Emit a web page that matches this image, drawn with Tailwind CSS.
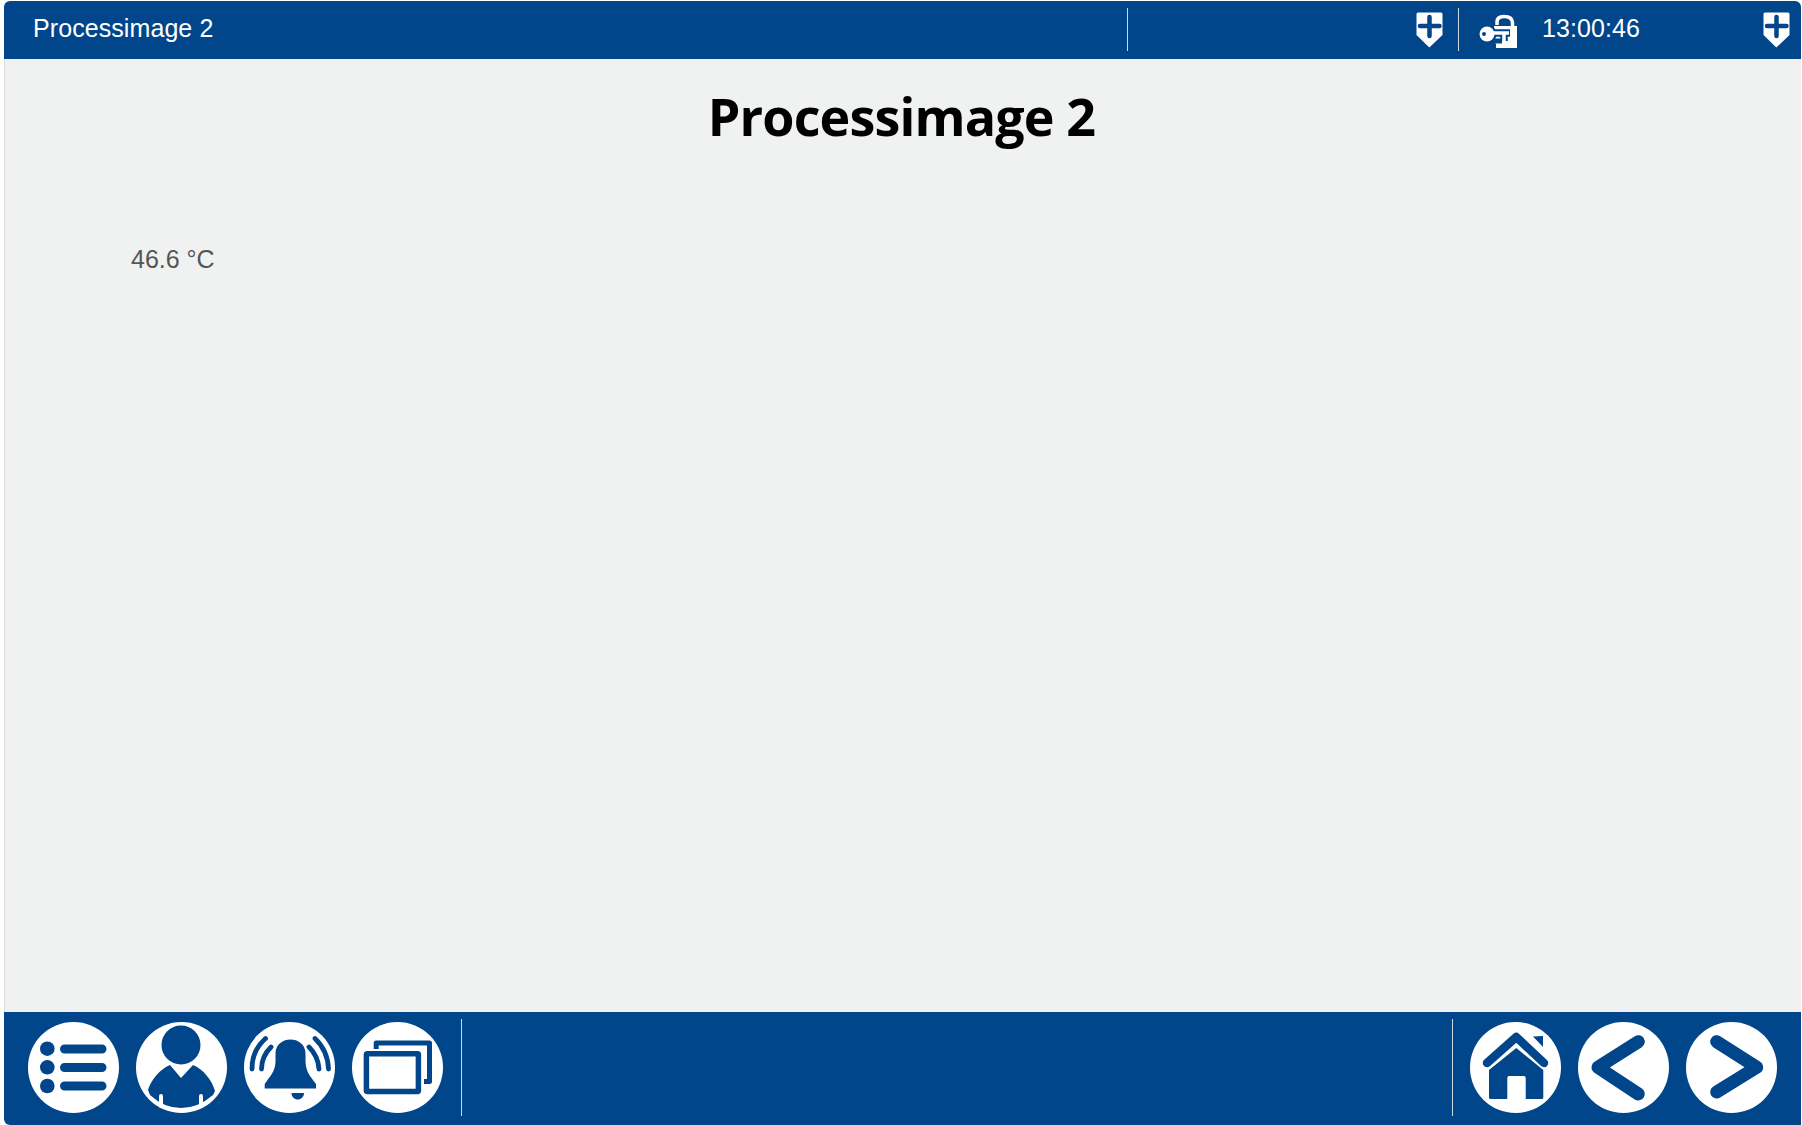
<!DOCTYPE html>
<html lang="en">

<head>
    <meta charset="UTF-8">
    <meta name="viewport" content="width=device-width, initial-scale=1.0">
    <title>Processimage 2</title>
    <script src="https://cdn.jsdelivr.net/npm/@tailwindcss/browser@4"></script>
</head>

<body class="bg-white overflow-hidden font-['Liberation_Sans',sans-serif]">

    <div class="w-[1802px] h-[1125px] pl-1 pr-px pt-px flex flex-col">

        <!-- top bar -->
        <header class="h-[58px] shrink-0 bg-[#01468b] rounded-tl-md rounded-tr-md flex items-center pr-[11px] pb-px text-white text-[25px] tracking-[0.08px]">
            <div class="w-[1123px] pl-[29px] pb-px">Processimage 2</div>
            <div class="w-px h-[43px] bg-white/80"></div>
            <svg class="ml-[288px] w-[27px] h-[36px]" viewBox="0 0 27 36">
                <path d="M2 0.500H25Q26.500 0.500 26.500 2V23L13.300 35.500L0.500 23V2Q0.500 0.500 2 0.500Z" fill="#fff" />
                <path d="M13.500 5V24M4 14H23.500" stroke="#01468b" stroke-width="4.500" stroke-linecap="round" fill="none" />
            </svg>
            <div class="ml-[15px] w-px h-[43px] bg-white/80"></div>
            <svg class="ml-[13px] w-[52px] h-[44px]" viewBox="0 0 52 44">
                <path d="M25 17V14Q25 8.500 32 8.500Q40.500 8.500 40.500 15V19" stroke="#fff" stroke-width="3.500" fill="none" />
                <path d="M22 18H45V40H24V36L22 34Z" fill="#fff" />
                <circle cx="15" cy="26" r="9.500" fill="#01468b" />
                <path d="M20 25H38M32 25V33" stroke="#01468b" stroke-width="7.500" fill="none" />
                <path d="M20 33H30" stroke="#01468b" stroke-width="5" fill="none" />
                <circle cx="15" cy="26" r="7.500" fill="#fff" />
                <circle cx="12" cy="26" r="2" fill="#01468b" />
                <path d="M20 25H37M32 25V33" stroke="#fff" stroke-width="3.500" fill="none" />
            </svg>
            <div class="ml-[18px] pb-px">13:00:46</div>
            <svg class="ml-auto w-[27px] h-[36px]" viewBox="0 0 27 36">
                <path d="M2 0.500H25Q26.500 0.500 26.500 2V23L13.300 35.500L0.500 23V2Q0.500 0.500 2 0.500Z" fill="#fff" />
                <path d="M13.500 5V24M4 14H23.500" stroke="#01468b" stroke-width="4.500" stroke-linecap="round" fill="none" />
            </svg>
        </header>

        <!-- picture area -->
        <main class="flex-1 bg-[#f0f2f1] border-l border-[#dcdcdc] pt-[21px] pl-[126px]">
            <h1 class="-ml-[129px] text-center text-[52px] tracking-[-0.85px] leading-[72px] font-bold text-black font-['Open_Sans',sans-serif]">Processimage 2</h1>
            <div class="mt-[92px] text-[25px] leading-[30px] text-[#555555]">46.6 °C</div>
        </main>

        <!-- bottom bar -->
        <footer class="h-[113px] shrink-0 bg-[#01468b] rounded-bl-md flex items-center pl-6 pr-6 pb-[2px] gap-[17px]">
            <!-- menu -->
            <svg class="w-[91px] h-[91px]" viewBox="0 0 91 91">
                <circle cx="45.500" cy="45.500" r="45.500" fill="#fff" />
                <circle cx="19.300" cy="26.700" r="7.300" fill="#01468b" />
                <circle cx="19.300" cy="45.300" r="7.300" fill="#01468b" />
                <circle cx="19.300" cy="64" r="7.300" fill="#01468b" />
                <path d="M36.500 27H74M36.500 45.500H74M36.500 64H74" stroke="#01468b" stroke-width="9" stroke-linecap="round" fill="none" />
            </svg>
            <!-- user -->
            <svg class="w-[91px] h-[91px]" viewBox="0 0 91 91">
                <circle cx="45.500" cy="45.500" r="45.500" fill="#fff" />
                <circle cx="45" cy="23" r="19.500" fill="#01468b" />
                <path d="M34 43L45 56L57 43C67 47 76 58 79 69L77 73Q62 86 45 86Q28 86 14 73L12 68C15 58 24 47 34 43Z" fill="#01468b" />
                <path d="M25 74V84M65 74V84" stroke="#fff" stroke-width="4" stroke-linecap="round" fill="none" />
            </svg>
            <!-- alarm -->
            <svg class="w-[91px] h-[91px]" viewBox="0 0 91 91">
                <circle cx="45.500" cy="45.500" r="45.500" fill="#fff" />
                <path d="M20.700 66.500H72V62C66 54 62 50 61.500 40V31C61 22 54 17.500 46.500 17.500C39 17.500 32 22 31.500 31V40C31 50 26 54 20.700 62Z" fill="#01468b" />
                <path d="M47.500 71H60C60 75 57 77.500 53.700 77.500C50.500 77.500 47.500 75 47.500 71Z" fill="#01468b" />
                <path d="M21.500 16.500C13 24 8 35 8 47M27 25C21 31 17.500 39 17.500 47M71 16.500C79 24 84 35 84.500 47M65 25C71 31 74.500 39 75 47" stroke="#01468b" stroke-width="4.800" stroke-linecap="round" fill="none" />
            </svg>
            <!-- windows -->
            <svg class="w-[91px] h-[91px]" viewBox="0 0 91 91">
                <circle cx="45.500" cy="45.500" r="45.500" fill="#fff" />
                <path d="M24.200 27V21H77.500V59.500H72" stroke="#01468b" stroke-width="5" stroke-linejoin="round" fill="none" />
                <rect x="14.400" y="31.800" width="52" height="37.800" rx="1" stroke="#01468b" stroke-width="5.500" fill="none" />
            </svg>
            <div class="ml-px w-px h-[97px] bg-white/80"></div>

            <div class="ml-auto w-px h-[97px] bg-white/80"></div>
            <!-- home -->
            <svg class="w-[91px] h-[91px]" viewBox="0 0 91 91">
                <circle cx="45.500" cy="45.500" r="45.500" fill="#fff" />
                <path d="M17 41L46.300 15L74 41" stroke="#01468b" stroke-width="8.500" stroke-linecap="round" stroke-linejoin="round" fill="none" />
                <path d="M63 14.500L73 14V25Z" fill="#01468b" />
                <path d="M46.300 26L73.300 48V75.500Q73.300 77 72 77H55.700V56Q55.700 54 54 54H39Q37.300 54 37.300 56V77H20.500Q19 77 19 75.500V48Z" fill="#01468b" />
            </svg>
            <!-- back -->
            <svg class="w-[91px] h-[91px]" viewBox="0 0 91 91">
                <circle cx="45.500" cy="45.500" r="45.500" fill="#fff" />
                <path d="M60.300 19.700L20 45.300L60.300 72" stroke="#01468b" stroke-width="13" stroke-linecap="round" stroke-linejoin="round" fill="none" />
            </svg>
            <!-- forward -->
            <svg class="w-[91px] h-[91px]" viewBox="0 0 91 91">
                <circle cx="45.500" cy="45.500" r="45.500" fill="#fff" />
                <path d="M30.700 19.700L70.700 45.300L30.700 70" stroke="#01468b" stroke-width="13" stroke-linecap="round" stroke-linejoin="round" fill="none" />
            </svg>
        </footer>
    </div>

</body>

</html>
